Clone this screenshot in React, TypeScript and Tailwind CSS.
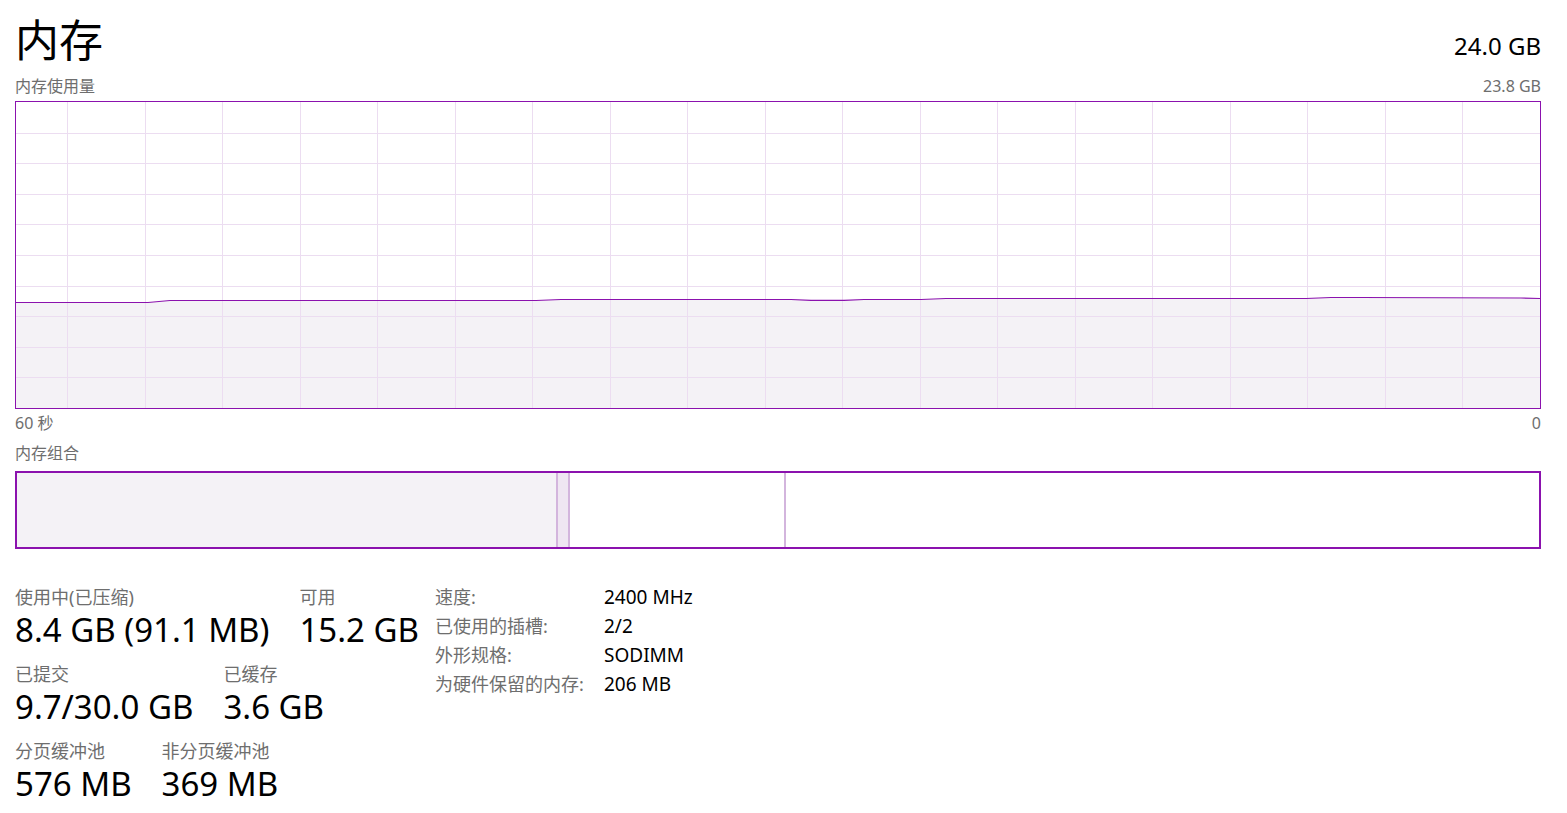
const PURPLE = "#8B12AE";

const points: [number, number][] = [
  [0, 200.5],
  [132, 200.5],
  [154, 198.5],
  [520, 198.5],
  [545, 197.5],
  [775, 197.5],
  [795, 198.3],
  [828, 198.3],
  [848, 197.5],
  [905, 197.5],
  [930, 196.5],
  [1290, 196.5],
  [1315, 195.5],
  [1345, 195.5],
  [1505, 196],
  [1524, 196.5],
];

function UsageChart() {
  const W = 1524;
  const H = 306;
  const line = points.map(([x, y]) => `${x},${y}`).join(" ");
  const area = `0,${H} ${line} ${W},${H}`;
  const vLines = Array.from({ length: 19 }, (_, k) => Math.round(51 + 77.5 * k) + 0.5);
  const hLines = Array.from({ length: 9 }, (_, k) => Math.round(30.6 * (k + 1)) + 0.5);

  return (
    <div className="h-[308px] border border-[#8B12AE] bg-white">
      <svg className="block h-full w-full" viewBox={`0 0 ${W} ${H}`} preserveAspectRatio="none">
        <polygon points={area} fill="#F4F2F6" />
        {vLines.map((x) => (
          <line key={`v${x}`} x1={x} x2={x} y1={0} y2={H} stroke="#ECDDF1" strokeWidth={1} />
        ))}
        {hLines.map((y) => (
          <line key={`h${y}`} x1={0} x2={W} y1={y} y2={y} stroke="#ECDDF1" strokeWidth={1} />
        ))}
        <polyline points={line} fill="none" stroke={PURPLE} strokeWidth={1.2} />
      </svg>
    </div>
  );
}

function CompositionBar() {
  return (
    <div className="mt-[2px] flex h-[78px] border-2 border-[#8B12AE] bg-white">
      <div className="w-[539px] bg-[#F4F2F6]" />
      <div className="w-[2px] bg-[#D3B5DD]" />
      <div className="w-[10px] bg-[#EFE6F2]" />
      <div className="w-[2px] bg-[#D3B5DD]" />
      <div className="w-[214px]" />
      <div className="w-[2px] bg-[#D3B5DD]" />
      <div className="flex-1" />
    </div>
  );
}

function Stat({ label, value }: { label: string; value: string }) {
  return (
    <div className="flex flex-col">
      <div className="text-[18px] leading-[24px] text-[#6e6e6e]">{label}</div>
      <div className="text-[33px] leading-[42px] text-black">{value}</div>
    </div>
  );
}

const details = [
  ["速度:", "2400 MHz"],
  ["已使用的插槽:", "2/2"],
  ["外形规格:", "SODIMM"],
  ["为硬件保留的内存:", "206 MB"],
];

export default function App() {
  return (
    <div className="min-h-screen bg-white pl-[15px] pr-[26px] font-['Noto_Sans','Noto_Sans_CJK_SC',sans-serif]">
      <div className="flex h-[76px] items-start justify-between">
        <h1 className="mt-[10px] text-[44px] font-normal leading-[60px] text-black">内存</h1>
        <div className="mt-[30px] text-[24px] leading-[32px] text-black">24.0 GB</div>
      </div>

      <div className="flex justify-between text-[16px] leading-[20px] text-[#6e6e6e]">
        <span>内存使用量</span>
        <span>23.8 GB</span>
      </div>

      <div className="mt-[5px]">
        <UsageChart />
      </div>

      <div className="flex justify-between text-[16px] leading-[28px] text-[#6e6e6e]">
        <span>60 秒</span>
        <span>0</span>
      </div>

      <div className="text-[16px] leading-[32px] text-[#6e6e6e]">内存组合</div>

      <CompositionBar />

      <div className="mt-[36px] flex gap-[16px]">
        <div className="flex flex-col gap-[11px]">
          <div className="flex gap-[30px]">
            <Stat label="使用中(已压缩)" value="8.4 GB (91.1 MB)" />
            <Stat label="可用" value="15.2 GB" />
          </div>
          <div className="flex gap-[30px]">
            <Stat label="已提交" value="9.7/30.0 GB" />
            <Stat label="已缓存" value="3.6 GB" />
          </div>
          <div className="flex gap-[30px]">
            <Stat label="分页缓冲池" value="576 MB" />
            <Stat label="非分页缓冲池" value="369 MB" />
          </div>
        </div>

        <div className="-mt-[2px] grid grid-cols-[169px_auto] content-start text-[18px] leading-[29px]">
          {details.map(([k, v]) => (
            <div key={k} className="contents">
              <span className="text-[#6e6e6e]">{k}</span>
              <span className="text-[19px] text-black">{v}</span>
            </div>
          ))}
        </div>
      </div>
    </div>
  );
}
